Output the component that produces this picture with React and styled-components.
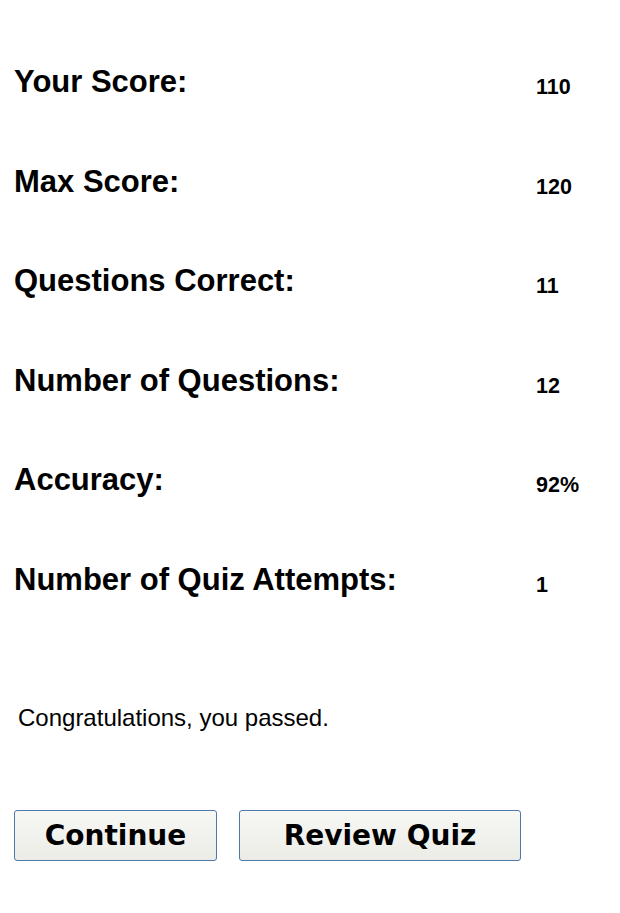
import React from 'react';
import styled, { createGlobalStyle } from 'styled-components';

const GlobalStyle = createGlobalStyle`
  html, body {
    margin: 0;
    padding: 0;
    background: #ffffff;
  }
`;

const Page = styled.div`
  padding: 65px 0 0 14px;
  font-family: "Liberation Sans", Arial, sans-serif;
  color: #000;
`;

const Row = styled.div`
  display: grid;
  grid-template-columns: 522px 1fr;
  align-items: start;
  height: 99.6px;
`;

const Label = styled.div`
  font-size: 31px;
  font-weight: 700;
  line-height: 34px;
`;

const Value = styled.div`
  font-size: 21.5px;
  font-weight: 700;
  line-height: 34px;
  margin-top: 5px;
`;

const Message = styled.p`
  margin: 41px 0 0 4px;
  font-size: 24px;
  line-height: 27px;
`;

const Actions = styled.div`
  display: flex;
  gap: 22px;
  margin-top: 79px;
`;

const Button = styled.button`
  width: ${(p) => p.$width}px;
  height: 51px;
  box-sizing: border-box;
  border: 1.5px solid #4f78ab;
  border-radius: 3px;
  background: linear-gradient(#f7f7f4, #ecece7);
  font-family: "DejaVu Sans", Verdana, sans-serif;
  font-weight: 700;
  font-size: 28px;
  color: #000;
  padding: 0;
  cursor: pointer;
`;

const stats = [
  ['Your Score:', '110'],
  ['Max Score:', '120'],
  ['Questions Correct:', '11'],
  ['Number of Questions:', '12'],
  ['Accuracy:', '92%'],
  ['Number of Quiz Attempts:', '1'],
];

export default function App() {
  return (
    <>
      <GlobalStyle />
      <Page>
        {stats.map(([label, value]) => (
          <Row key={label}>
            <Label>{label}</Label>
            <Value>{value}</Value>
          </Row>
        ))}
        <Message>Congratulations, you passed.</Message>
        <Actions>
          <Button $width={203}>Continue</Button>
          <Button $width={282}>Review Quiz</Button>
        </Actions>
      </Page>
    </>
  );
}
